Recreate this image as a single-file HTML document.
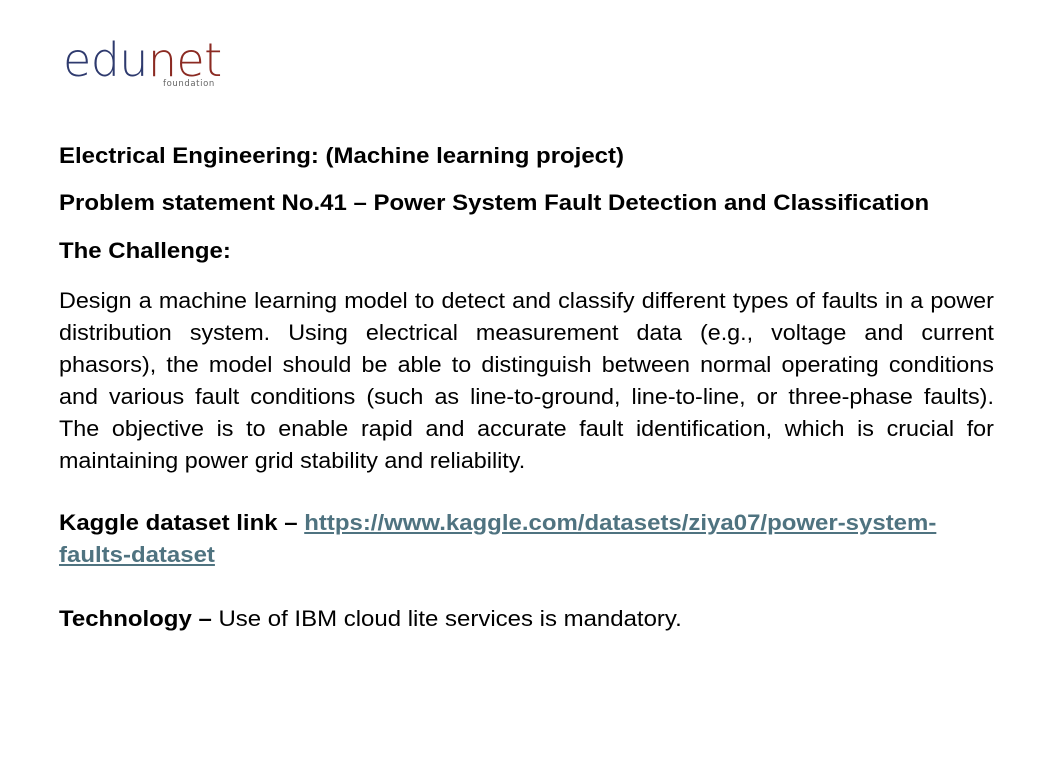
<!DOCTYPE html>
<html><head><meta charset="utf-8"><style>
html,body{margin:0;padding:0;background:#fff;width:1046px;height:757px;overflow:hidden}
body{position:relative;font-family:"Liberation Sans",Arial,sans-serif;color:#000}
.logo{position:absolute;left:63px;top:32px;font-family:"DejaVu Sans",sans-serif;font-weight:200;font-size:46px;letter-spacing:-0.6px;line-height:56px}
.logo .a{color:#2e3a6e}.logo .b{color:#8b2a22}
.found{position:absolute;left:163px;top:79px;font-family:"DejaVu Sans",sans-serif;font-size:8.5px;color:#666;letter-spacing:0.6px}
.s{position:absolute;left:59px;transform-origin:0 0;transform:scaleX(1.09)}
.l{font-size:22px;white-space:nowrap;line-height:24px}
b{font-weight:bold}
.p{position:absolute;left:59px;top:285px;width:882px;font-size:22px;line-height:32px;transform-origin:0 0;transform:scaleX(1.06)}
.p div{white-space:nowrap;text-align:justify;text-align-last:justify}
.p div.last{text-align-last:left}
a{color:#4f7380;font-weight:bold;text-decoration:underline}
</style></head><body>
<div class="logo"><span class="a">edu</span><span class="b">net</span></div>
<div class="found">foundation</div>
<div class="s l" style="top:144px"><b>Electrical Engineering: (Machine learning project)</b></div>
<div class="s l" style="top:191px"><b>Problem statement No.41 – Power System Fault Detection and Classification</b></div>
<div class="s l" style="top:239px"><b>The Challenge:</b></div>
<div class="p">
<div>Design a machine learning model to detect and classify different types of faults in a power</div>
<div>distribution system. Using electrical measurement data (e.g., voltage and current</div>
<div>phasors), the model should be able to distinguish between normal operating conditions</div>
<div>and various fault conditions (such as line-to-ground, line-to-line, or three-phase faults).</div>
<div>The objective is to enable rapid and accurate fault identification, which is crucial for</div>
<div class="last">maintaining power grid stability and reliability.</div>
</div>
<div class="s l" style="top:511px"><b>Kaggle dataset link – </b><a>https://www.kaggle.com/datasets/ziya07/power-system-</a></div>
<div class="s l" style="top:543px"><a>faults-dataset</a></div>
<div class="s l" style="top:607px"><b>Technology – </b>Use of IBM cloud lite services is mandatory.</div>
</body></html>
